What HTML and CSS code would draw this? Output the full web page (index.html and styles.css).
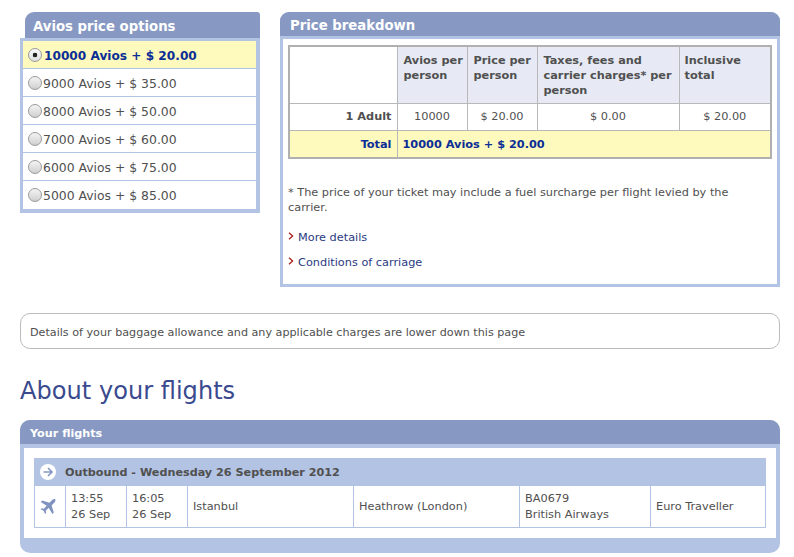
FILE: index.html
```html
<!DOCTYPE html>
<html lang="en">
<head>
<meta charset="utf-8">
<title>Avios price options</title>
<link rel="stylesheet" href="styles.css">
</head>
<body>
<div class="top">
  <section class="options">
    <h2 class="options-title">Avios price options</h2>
    <div class="options-body">
      <label class="option selected"><input type="radio" name="p" checked><span>10000 Avios + $ 20.00</span></label>
      <label class="option"><input type="radio" name="p"><span>9000 Avios + $ 35.00</span></label>
      <label class="option"><input type="radio" name="p"><span>8000 Avios + $ 50.00</span></label>
      <label class="option"><input type="radio" name="p"><span>7000 Avios + $ 60.00</span></label>
      <label class="option"><input type="radio" name="p"><span>6000 Avios + $ 75.00</span></label>
      <label class="option"><input type="radio" name="p"><span>5000 Avios + $ 85.00</span></label>
    </div>
  </section>
  <section class="breakdown">
    <h2 class="panel-title">Price breakdown</h2>
    <div class="breakdown-body">
      <div class="table-wrap">
        <table class="prices">
          <colgroup><col class="c1"><col class="c2"><col class="c3"><col class="c4"><col class="c5"></colgroup>
          <tr class="head">
            <td class="blank"></td>
            <th>Avios per person</th>
            <th>Price per person</th>
            <th>Taxes, fees and carrier charges* per person</th>
            <th class="last">Inclusive total</th>
          </tr>
          <tr class="vals">
            <td class="label">1 Adult</td>
            <td>10000</td>
            <td>$ 20.00</td>
            <td>$ 0.00</td>
            <td>$ 20.00</td>
          </tr>
          <tr class="total">
            <td class="label">Total</td>
            <td colspan="4">10000 Avios + $ 20.00</td>
          </tr>
        </table>
      </div>
      <p class="note">* The price of your ticket may include a fuel surcharge per flight levied by the carrier.</p>
      <a class="more first" href="#"><svg class="chev" width="6" height="9" viewBox="0 0 6 9"><path d="M1 .8 4.600 4 1 7.200" fill="none" stroke="#a8201a" stroke-width="1.300"/></svg>More details</a>
      <a class="more" href="#"><svg class="chev" width="6" height="9" viewBox="0 0 6 9"><path d="M1 .8 4.600 4 1 7.200" fill="none" stroke="#a8201a" stroke-width="1.300"/></svg>Conditions of carriage</a>
    </div>
  </section>
</div>
<div class="notice">Details of your baggage allowance and any applicable charges are lower down this page</div>
<h1 class="about">About your flights</h1>
<section class="flights">
  <h2 class="flights-title">Your flights</h2>
  <div class="flights-body">
    <div class="leg-head">
      <svg class="arrow" width="16" height="16" viewBox="0 0 16 16"><circle cx="8" cy="8" r="8" fill="#fff"/><path d="M3.500 8h8M8 4l4 4-4 4" fill="none" stroke="#8598c4" stroke-width="1.700"/></svg>
      <span>Outbound - Wednesday 26 September 2012</span>
    </div>
    <table class="leg">
      <colgroup><col class="f1"><col class="f2"><col class="f3"><col class="f4"><col class="f5"><col class="f6"><col class="f7"></colgroup>
      <tr>
        <td class="plane"><svg width="16" height="16" viewBox="0 0 16 16"><path d="M15.600.4c-.9-.8-2.500-.3-3.400.6L9.400 3.800 2.200 1.600.8 3l5.900 3.700-2.900 3-2.200-.4L.6 10.300l3 1.500L5.100 15l1-1-.4-2.300 3-2.900L12.400 15l1.400-1.400-2.200-7.200 2.800-2.800c.9-.9 1.400-2.700.6-3.600z" fill="#7f92c0"/></svg></td>
        <td>13:55<br>26 Sep</td>
        <td>16:05<br>26 Sep</td>
        <td>Istanbul</td>
        <td>Heathrow (London)</td>
        <td>BA0679<br>British Airways</td>
        <td>Euro Traveller</td>
      </tr>
    </table>
  </div>
</section>
</body>
</html>
```
FILE: styles.css
```css
* { box-sizing: border-box; }
html, body { margin: 0; padding: 0; }
body {
  width: 794px;
  height: 557px;
  overflow: hidden;
  padding: 12px 14px 0 20px;
  background: #fff;
  color: #505050;
  font: 11.3px/15px "DejaVu Sans", Verdana, sans-serif;
}
h1, h2, p { margin: 0; }

.top { display: flex; gap: 20px; align-items: flex-start; }

.options { width: 240px; }
.options-title {
  margin-left: 5px;
  height: 26px;
  padding: 7px 8px 0;
  background: #8799c2;
  color: #fff;
  font-size: 13.26px;
  line-height: 16px;
  border-radius: 9px 3px 0 0;
}
.options-body {
  border: solid #b3c3e3;
  border-width: 3px 4px 4px 3px;
  background: #fff;
}
.option {
  display: flex;
  align-items: center;
  gap: 1px;
  height: 28px;
  padding-left: 5px;
  border-bottom: 1px solid #b3c3e3;
  font-size: 12.4px;
}
.option span { padding-top: 2px; }
.option:last-child { border-bottom: 0; padding-bottom: 1px; }
.option.selected {
  gap: 2px;
  background: #fef9bd;
  color: #0a2e96;
  font-size: 12.15px;
  font-weight: bold;
}
.option.selected span { padding-top: 3px; }
.option input {
  appearance: none;
  -webkit-appearance: none;
  flex: none;
  width: 14px;
  height: 14px;
  margin: 0;
  border: 1px solid #9a9a9a;
  border-radius: 50%;
  background: linear-gradient(#f4f4f4, #cfcfcf);
}
.option input:checked {
  background: radial-gradient(circle, #222 0 2px, transparent 2.6px), linear-gradient(#fafafa, #dedede);
}

.breakdown {
  width: 500px;
  background: #b3c3e3;
  padding: 0 3px 3px;
  border-radius: 9px 9px 0 0;
}
.panel-title {
  margin: 0 -3px;
  height: 24px;
  padding: 6px 10px 0;
  background: #8799c2;
  color: #fff;
  font-size: 13.26px;
  line-height: 16px;
  border-radius: 9px 9px 0 0;
}
.breakdown-body {
  margin-top: 3px;
  height: 245px;
  padding: 6px 5px 0;
  background: #fff;
}
.table-wrap {
  width: 484px;
  border: 2px solid #b0b0b0;
}
.prices {
  width: 480px;
  table-layout: fixed;
  border-collapse: collapse;
}
.c1 { width: 107px; }
.c2 { width: 70px; }
.c3 { width: 70px; }
.c4 { width: 142px; }
.c5 { width: 91px; }
.prices th, .prices td { border: 1px solid #b8b8b8; padding: 0 5px; }
.prices tr:first-child > * { border-top: 0; }
.prices tr:last-child > * { border-bottom: 0; }
.prices tr > :first-child { border-left: 0; }
.prices tr > :last-child { border-right: 0; }
.prices th {
  height: 56px;
  padding: 6px 1px 0 6px;
  vertical-align: top;
  text-align: left;
  background: #e7eaf4;
  font-weight: bold;
}
.prices th.last { padding-left: 5px; }
.prices .blank { background: #fff; }
.vals td { height: 27px; text-align: center; }
.prices .label { text-align: right; font-weight: bold; }
.total td {
  height: 27px;
  padding-top: 2px;
  background: #fef9bd;
  color: #0a2e96;
  font-weight: bold;
}
.note { margin-top: 26px; width: 450px; }
.more {
  display: flex;
  align-items: flex-start;
  gap: 4px;
  margin-top: 10px;
  color: #2b3a82;
  text-decoration: none;
}
.more.first { margin-top: 15px; }
.chev { margin-top: 2px; flex: none; }

.notice {
  width: 760px;
  height: 36px;
  margin-top: 26px;
  padding: 11px 9px 0;
  border: 1px solid #bcbcbc;
  border-radius: 10px;
  font-size: 11.17px;
}
.about {
  margin-top: 27px;
  color: #3a4a8e;
  font-size: 24.1px;
  line-height: 30px;
  font-weight: normal;
}
.flights {
  width: 760px;
  margin-top: 14px;
  height: 133px;
  background: #b3c3e3;
  border-radius: 10px;
}
.flights-title {
  height: 24px;
  padding: 6px 10px 0;
  background: #8799c2;
  color: #fff;
  font-size: 11.2px;
  line-height: 15px;
  border-radius: 10px 10px 0 0;
}
.flights-body {
  margin: 4px 4px 0;
  height: 90px;
  padding: 10px;
  background: #fff;
}
.leg-head {
  display: flex;
  align-items: center;
  gap: 7px;
  height: 28px;
  padding-left: 6px;
  background: #b3c3e3;
  font-size: 11.2px;
  font-weight: bold;
}
.arrow { flex: none; margin-right: 2px; }
.leg {
  width: 731px;
  table-layout: fixed;
  border-collapse: collapse;
}
.f1 { width: 31px; }
.f2 { width: 61px; }
.f3 { width: 61px; }
.f4 { width: 166px; }
.f5 { width: 166px; }
.f6 { width: 131px; }
.f7 { width: 115px; }
.leg td {
  height: 41px;
  padding: 2px 5px 0;
  border: 1px solid #b3c3e3;
  border-top: 0;
  line-height: 16px;
}
.leg .plane { padding: 1px 0 0 5px; }
.plane svg { display: block; }
```
